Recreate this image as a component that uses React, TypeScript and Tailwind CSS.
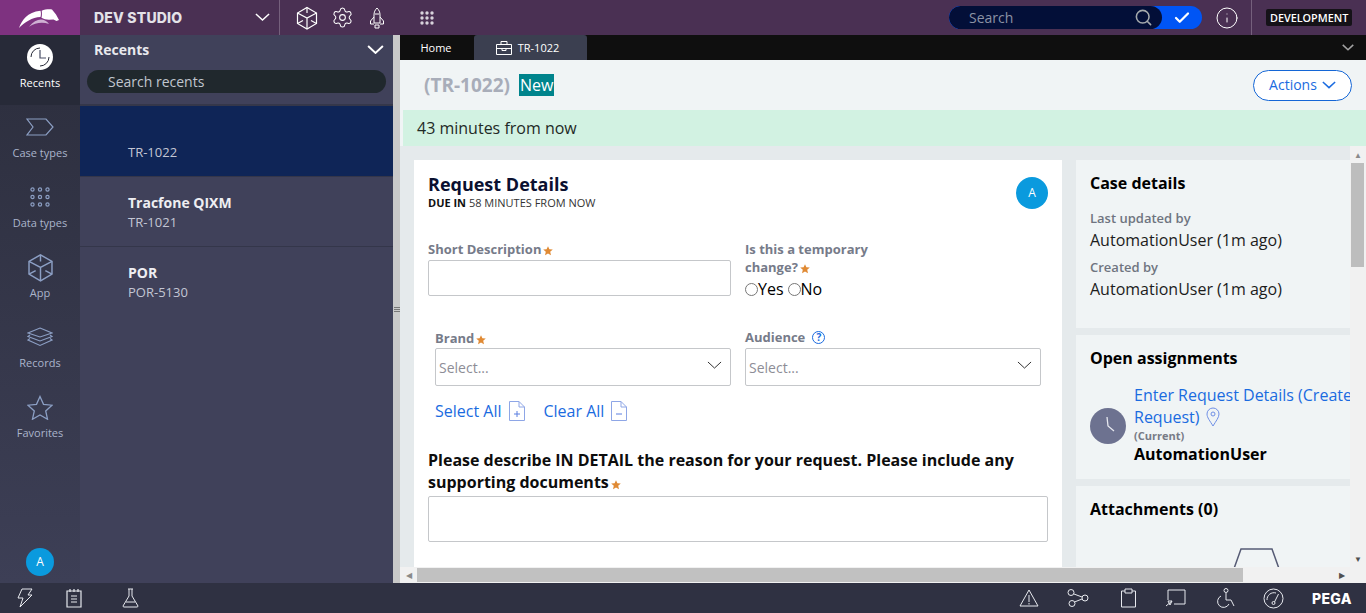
import React from "react";
import { Check, Search, Settings, Info } from "lucide-react";

const sans = "font-['Open_Sans',sans-serif]";

const Logo = () => (
  <svg width="42" height="20" viewBox="0 0 42 20">
    <path d="M0 19C3 11 8 3 21.500 1.700c.6 2 .6 4 0 6.300C13 8.500 6 13 0 19z" fill="#fff" />
    <path d="M10 17.700C14 13 18 10.500 22 10.500c3 0 6 1.500 8 4.500C23 12.500 16 14 10 17.700z" fill="#cfb1d3" />
    <path d="M22.600 1.700C26 .3 30 .2 33 .5l4 5 3 5.500-2.500 1-3-1.500-4.500.2c-3-.2-5.500-.6-7.500-2 .6-2.500.6-5 .1-7.500z" fill="#fff" />
  </svg>
);

const Chevron = ({ width, color, stroke = 1.500 }: { width: number; color: string; stroke?: number }) => (
  <svg width={width} height={width / 2 + 1} viewBox="0 0 16 9" fill="none" stroke={color} strokeWidth={(stroke * 16) / width}>
    <path d="M1 1l7 6.500L15 1" />
  </svg>
);

const Cube = ({ size = 24, color = "#fff" }: { size?: number; color?: string }) => (
  <svg width={size} height={size} viewBox="0 0 24 24" fill="none" stroke={color} strokeWidth="1.200">
    <path d="M12 1.500 21.500 7v10.500L12 23 2.500 17.500V7z" />
    <path d="M2.500 7 12 12l9.500-5M12 12v11M12 1.500V7M2.500 17.500 8 14.500M21.500 17.500 16 14.500" />
  </svg>
);

const Rocket = () => (
  <svg width="16" height="22" viewBox="0 0 16 22" fill="none" stroke="#fff" strokeWidth="1">
    <path d="M8 1c2 2 3 4 3 7v8H5V8c0-3 1-5 3-7z" />
    <path d="M5 10 1.500 14v3H5M11 10l3.500 4v3H11M6 18h4v3H6zM6 7h4" />
  </svg>
);

const navStroke = "#8c9fc4";

const navItems = [
  {
    label: "Case types",
    icon: (
      <svg width="28" height="18" viewBox="0 0 28 18" fill="none" stroke={navStroke} strokeWidth="1.200">
        <path d="M1 1h19l7 8-7 8H1l6-8z" />
      </svg>
    ),
  },
  {
    label: "Data types",
    icon: (
      <svg width="20" height="20" viewBox="0 0 20 20" fill="none" stroke={navStroke} strokeWidth="1.200">
        {[2.500, 10, 17.500].flatMap((y) => [2.500, 10, 17.500].map((x) => <circle key={`${x}-${y}`} cx={x} cy={y} r="1.600" />))}
      </svg>
    ),
  },
  { label: "App", icon: <Cube size={29} color={navStroke} /> },
  {
    label: "Records",
    icon: (
      <svg width="26" height="20" viewBox="0 0 26 20" fill="none" stroke={navStroke} strokeWidth="1.100">
        <path d="M13 1 25 6l-12 4L1 6z" />
        <path d="M3 8 1 9.500l12 4.500 12-4.500L23 8" />
        <path d="M3 11.500 1 13l12 5.500L25 13l-2-1.500" />
      </svg>
    ),
  },
  {
    label: "Favorites",
    icon: (
      <svg width="26" height="25" viewBox="0 0 26 25" fill="none" stroke={navStroke} strokeWidth="1.300">
        <path d="m13 1.500 3.500 7.800 8.500.9-6.300 5.700 1.800 8.300L13 20l-7.500 4.200 1.800-8.300L1 10.200l8.500-.9z" />
      </svg>
    ),
  },
];

const Avatar = ({ size }: { size: string }) => (
  <div className={`${size} flex shrink-0 items-center justify-center rounded-full bg-[#0a9ade] text-[12px] text-white`}>A</div>
);

const Star = () => (
  <svg width="10" height="10" viewBox="0 0 10 10" fill="#e08a34" className="ml-[2px] inline-block align-[-2px]">
    <path d="m5 .2 1.400 3.100 3.400.3-2.600 2.200.8 3.400L5 7.400 2 9.200l.8-3.400L.2 3.600l3.400-.3z" />
  </svg>
);

const Field = ({ label, children, className }: { label: React.ReactNode; children?: React.ReactNode; className?: string }) => (
  <div className={className}>
    <div className="text-[13px] font-bold leading-[18px] text-[#767b89]">{label}</div>
    {children}
  </div>
);

const SelectBox = () => (
  <div className="mt-px flex h-[38px] items-center justify-between rounded-[2px] border border-[#c5c7ca] bg-white pl-[3px] pr-[8px] text-[14px] text-[#8d8d96]">
    <span>Select...</span>
    <span className="-mt-[3px]">
      <Chevron width={15} color="#333" stroke={1} />
    </span>
  </div>
);

const FileIcon = ({ sign }: { sign: string }) => (
  <svg width="18" height="20" viewBox="0 0 18 20" fill="none" stroke="#8ea6e6" strokeWidth="1">
    <path d="M1.500.5H11l5.500 5.500v13.500h-15zM11 .5V6h5.500" />
    <path d={sign} stroke="#5a7fe0" />
  </svg>
);

const SideCard = ({ title, className, children }: { title: string; className?: string; children?: React.ReactNode }) => (
  <div className={`overflow-hidden bg-[#f0f4f5] px-[14px] ${className}`}>
    <div className="text-[16px] font-bold leading-[22px] text-black">{title}</div>
    {children}
  </div>
);

const Meta = ({ label, value }: { label: string; value: string }) => (
  <div>
    <div className="text-[13px] font-semibold leading-[18px] text-[#6f7480]">{label}</div>
    <div className="mt-[2px] text-[16px] leading-[22px] text-[#1c1c1c]">{value}</div>
  </div>
);

export default function App() {
  return (
    <div className={`${sans} flex h-[613px] w-[1366px] flex-col overflow-hidden bg-[#2f3142]`}>
      <header className="flex h-[35px] shrink-0 bg-[#4a3053]">
        <div className="flex w-[80px] items-center justify-center bg-[#7e3280] pt-[3px]">
          <Logo />
        </div>
        <div className="flex w-[200px] items-center justify-between border-r border-[#75607c] pl-[14px] pr-[9px]">
          <span className="font-['Inter',sans-serif] text-[14px] font-extrabold tracking-[0.2px] text-[#e4e2e8]">DEV STUDIO</span>
          <Chevron width={15} color="#fff" />
        </div>
        <div className="ml-[15px] flex items-center gap-[12px]">
          <Cube size={24} />
          <Settings size={23} strokeWidth={1.100} className="text-white" />
          <span className="ml-[3px]">
            <Rocket />
          </span>
          <svg width="14" height="14" viewBox="0 0 14 14" fill="#d8d3dc" className="ml-[23px]">
            {[2, 7, 12].flatMap((y) => [2, 7, 12].map((x) => <circle key={`${x}-${y}`} cx={x} cy={y} r="1.700" />))}
          </svg>
        </div>
        <div className="ml-auto flex items-center">
          <div className="flex h-[23px] w-[253px] overflow-hidden rounded-full bg-[#0055f5]">
            <div className="flex w-[213px] items-center justify-between rounded-full bg-[#030f38] pl-[20px] pr-[9px]">
              <span className="text-[14px] text-[#8b92a5]">Search</span>
              <Search size={19} strokeWidth={2} className="text-[#a4a9ac]" />
            </div>
            <div className="flex flex-1 items-center justify-center">
              <Check size={18} strokeWidth={3} className="text-white" />
            </div>
          </div>
          <Info size={24} strokeWidth={1} className="ml-[13px] text-white" />
          <div className="ml-[12px] flex h-[35px] w-[115px] items-center border-l border-[#75607c] pl-[14px]">
            <span className="whitespace-nowrap rounded-[2px] bg-[#151218] px-[4px] py-[1px] text-[10.800px] font-semibold leading-[15px] text-white">DEVELOPMENT</span>
          </div>
        </div>
      </header>

      <div className="flex min-h-0 flex-1">
        <nav className="flex w-[80px] shrink-0 flex-col bg-gradient-to-b from-[#2c2e3d] to-[#3d3f56]">
          <div className="flex h-[70px] flex-col items-center bg-[#272a38] pt-[9px]">
            <svg width="26" height="26" viewBox="0 0 26 26">
              <circle cx="13" cy="13" r="13" fill="#fff" />
              <path d="M13 6v8h6" fill="none" stroke="#4a4f66" strokeWidth="1.200" />
              <path d="M4 13a9 9 0 0 1 9-9M22 13a9 9 0 0 1-9 9" fill="none" stroke="#272a38" strokeWidth="1" />
            </svg>
            <span className="mt-[5px] text-[11px] leading-[16px] text-white">Recents</span>
          </div>
          {navItems.map((item) => (
            <div key={item.label} className="flex h-[70px] flex-col items-center justify-end pb-[14px]">
              <div className="flex h-[30px] items-center">{item.icon}</div>
              <span className="mt-[3px] text-[11px] leading-[16px] text-[#aab4cb]">{item.label}</span>
            </div>
          ))}
          <div className="mt-auto mb-[7px] flex justify-center">
            <Avatar size="h-[28px] w-[28px]" />
          </div>
        </nav>

        <aside className="flex w-[313px] shrink-0 flex-col bg-[#40415a]">
          <div className="h-[71px] shrink-0 border-b-2 border-[#35374a]">
            <div className="flex h-[29px] items-center justify-between pl-[14px] pr-[9px]">
              <span className="text-[14px] font-bold text-[#e9e9ee]">Recents</span>
              <Chevron width={17} color="#fff" stroke={2} />
            </div>
            <div className="ml-[7px] mr-[7px] mt-[6px] flex h-[23px] items-center rounded-full bg-[#20282d] pl-[21px] text-[14px] text-[#c0c6cf]">Search recents</div>
          </div>
          <div className="h-[71px] border-b border-[#34364a] bg-[#0f2557] pl-[48px] pt-[37px] text-[13px] leading-[18px] text-[#c3c6d4]">TR-1022</div>
          <div className="h-[70px] border-b border-[#34364a] pl-[48px] pt-[16px]">
            <div className="text-[14px] font-bold leading-[20px] text-[#eeeef2]">Tracfone QIXM</div>
            <div className="text-[13px] leading-[18px] text-[#c3c6d4]">TR-1021</div>
          </div>
          <div className="h-[70px] pl-[48px] pt-[16px]">
            <div className="text-[14px] font-bold leading-[20px] text-[#eeeef2]">POR</div>
            <div className="text-[13px] leading-[18px] text-[#c3c6d4]">POR-5130</div>
          </div>
        </aside>

        <div className="flex w-[7px] shrink-0 flex-col items-center justify-center gap-[1px] bg-[#c9c9c9]">
          <div className="h-px w-[6px] bg-[#777]" />
          <div className="h-px w-[6px] bg-[#777]" />
          <div className="h-px w-[6px] bg-[#777]" />
        </div>

        <main className="flex min-w-0 flex-1 flex-col">
          <div className="flex h-[25px] shrink-0 bg-[#0f0f0f] text-[11px] text-white">
            <div className="flex w-[74px] items-center justify-center pr-[2px] pt-px">Home</div>
            <div className="flex w-[113px] items-center justify-center gap-[6px] rounded-t-[3px] bg-[#3b3f50] pr-[6px] pt-px">
              <svg width="16" height="14" viewBox="0 0 16 14" fill="none" stroke="#fff" strokeWidth="1">
                <path d="M.5 3.500h15v10H.5zM5 3.500v-3h6v3M.5 7.500h15M6 7.500v2h4v-2" />
              </svg>
              TR-1022
            </div>
            <span className="ml-auto mr-[12px] mt-[9px]">
              <Chevron width={12} color="#a3a3a3" />
            </span>
          </div>

          <div className="flex h-[50px] shrink-0 items-center bg-[#f0f4f5] pl-[24px] pr-[14px]">
            <span className="text-[19px] font-bold text-[#a8adb9]">(TR-1022)</span>
            <span className="ml-[9px] bg-[#00848c] px-px text-[16px] leading-[22px] text-white">New</span>
            <div className="ml-auto flex h-[31px] w-[99px] items-center justify-center gap-[5px] rounded-full border border-[#1466d6] bg-white pb-px text-[14px] text-[#1a6be0]">
              Actions
              <Chevron width={14} color="#1a6be0" />
            </div>
          </div>

          <div className="flex h-[36px] shrink-0 items-center border-l-[3px] border-[#f0f4f5] bg-[#d2f2e2] pl-[14px] text-[16px] text-[#1f2a26]">43 minutes from now</div>

          <div className="flex min-h-0 flex-1">
            <div className="flex min-w-0 flex-1 flex-col">
              <div className="flex min-h-0 flex-1 gap-[14px] overflow-hidden bg-[#e5eaec] pl-[14px] pt-[14px]">
                <section className="w-[648px] shrink-0 bg-white px-[14px] pt-[13px]">
                  <div className="flex items-start justify-between">
                    <div>
                      <div className="text-[18px] font-bold leading-[23px] text-[#0a1030]">Request Details</div>
                      <div className="text-[11px] leading-[14px] text-[#333]">
                        <b className="text-[#111]">DUE IN</b> 58 MINUTES FROM NOW
                      </div>
                    </div>
                    <Avatar size="h-[32px] w-[32px] mt-[4px]" />
                  </div>

                  <div className="mt-[30px] flex">
                    <Field className="w-[303px]" label={<>Short Description<Star /></>}>
                      <div className="mt-[2px] h-[36px] rounded-[2px] border border-[#c5c7ca]" />
                    </Field>
                    <Field className="ml-[14px] w-[160px]" label={<>Is this a temporary change?<Star /></>}>
                      <div className="mt-[2px] flex items-center text-[16px] leading-[22px] text-black">
                        <span className="h-[13px] w-[13px] rounded-full border border-[#777]" />
                        Yes
                        <span className="ml-[4px] h-[13px] w-[13px] rounded-full border border-[#777]" />
                        No
                      </div>
                    </Field>
                  </div>

                  <div className="mt-[29px] flex gap-[14px] pl-[7px]">
                    <Field className="w-[296px]" label={<>Brand<Star /></>}>
                      <SelectBox />
                    </Field>
                    <Field
                      className="w-[296px]"
                      label={
                        <span className="flex -translate-y-px items-center gap-[7px]">
                          Audience
                          <span className="flex h-[13px] w-[13px] items-center justify-center rounded-full border border-[#1a6be0] text-[10px] text-[#1a6be0]">?</span>
                        </span>
                      }
                    >
                      <SelectBox />
                    </Field>
                  </div>

                  <div className="ml-[7px] mt-[14px] flex items-center text-[16px] leading-[22px] text-[#1a6be0]">
                    Select All
                    <span className="ml-[6px]">
                      <FileIcon sign="M6 13h6M9 10v6" />
                    </span>
                    <span className="ml-[18px]">Clear All</span>
                    <span className="ml-[6px]">
                      <FileIcon sign="M6 13h6" />
                    </span>
                  </div>

                  <div className="mt-[27px] text-[16px] font-bold leading-[22px] text-[#0d0d0d]">
                    Please describe IN DETAIL the reason for your request. Please include any supporting documents
                    <Star />
                  </div>
                  <div className="mt-[3px] h-[46px] rounded-[2px] border border-[#c5c7ca]" />
                </section>

                <div className="flex w-[274px] shrink-0 flex-col gap-[7px] overflow-hidden">
                  <SideCard title="Case details" className="h-[168px] shrink-0 pt-[12px]">
                    <div className="mt-[15px] flex flex-col gap-[7px]">
                      <Meta label="Last updated by" value="AutomationUser (1m ago)" />
                      <Meta label="Created by" value="AutomationUser (1m ago)" />
                    </div>
                  </SideCard>
                  <SideCard title="Open assignments" className="h-[144px] shrink-0 pt-[12px]">
                    <div className="mt-[15px] flex items-center gap-[8px]">
                      <div className="mt-[2px] flex h-[36px] w-[36px] shrink-0 items-center justify-center rounded-full bg-[#6d7290]">
                        <svg width="36" height="36" viewBox="0 0 36 36" fill="none" stroke="#e6e8ef" strokeWidth="1.300">
                          <path d="M17 9l1 9 6 5" />
                        </svg>
                      </div>
                      <div className="min-w-0">
                        <div className="w-[216px] whitespace-nowrap text-[16px] leading-[22px] text-[#1a6be0]">
                          Enter Request Details (Create
                          <br />
                          <span className="inline-flex items-center gap-[6px]">
                            Request)
                            <svg width="14" height="20" viewBox="0 0 14 20" fill="none" stroke="#6f8fe6" strokeWidth="1">
                              <path d="M7 19C4 14 1 10.500 1 7a6 6 0 0 1 12 0c0 3.500-3 7-6 12z" />
                              <circle cx="7" cy="7" r="2" />
                            </svg>
                          </span>
                        </div>
                        <div className="mt-px text-[11px] font-bold leading-[14px] text-[#777b86]">(Current)</div>
                        <div className="text-[16px] font-bold leading-[22px] text-black">AutomationUser</div>
                      </div>
                    </div>
                  </SideCard>
                  <SideCard title="Attachments (0)" className="min-h-0 flex-1 pt-[12px]">
                    <div className="ml-[141px] mt-[28px]">
                      <svg width="51" height="30" viewBox="0 0 51 30" fill="none" stroke="#565b75" strokeWidth="1.500">
                        <path d="M0 29 10 1h31l10 28" />
                      </svg>
                    </div>
                  </SideCard>
                </div>
              </div>

              <div className="flex h-[16px] shrink-0 items-center bg-[#f1f1f1]">
                <span className="flex w-[17px] justify-center text-[8px] leading-none text-[#8a8a8a]">◀</span>
                <div className="h-[14px] w-[826px] bg-[#c1c1c1]" />
                <span className="ml-auto flex w-[17px] justify-center text-[8px] leading-none text-[#505050]">▶</span>
              </div>
            </div>

            <div className="flex w-[16px] shrink-0 flex-col items-center bg-[#f1f1f1]">
              <span className="h-[17px] text-[8px] leading-[17px] text-[#8a8a8a]">▲</span>
              <div className="ml-[-1px] h-[104px] w-[13px] bg-[#bdbdbd]" />
              <span className="mt-auto h-[33px] text-[8px] leading-[17px] text-[#505050]">▼</span>
            </div>
          </div>
        </main>
      </div>

      <footer className="flex h-[30px] shrink-0 items-center bg-[#2f3142] text-white">
        <div className="flex items-center gap-[33px] pl-[17px]">
          <svg width="16" height="20" viewBox="0 0 16 20" fill="none" stroke="#e7e9ee" strokeWidth="1">
            <path d="M5 1h10l-4 6h4L3 19l3-9H1z" />
          </svg>
          <svg width="16" height="20" viewBox="0 0 16 20" fill="none" stroke="#e7e9ee" strokeWidth="1.200">
            <path d="M1 3h14v16H1zM4 1v3M8 1v3M12 1v3M5 8h6M5 11h6M5 14h6" />
          </svg>
          <svg width="17" height="20" viewBox="0 0 17 20" fill="none" stroke="#e7e9ee" strokeWidth="1" className="ml-[7px]">
            <path d="M6 1h5M7 1v7L1 18q0 1 1 1h13q1 0 1-1L10 8V1M4 14h9" />
          </svg>
        </div>
        <div className="ml-auto flex items-center gap-[28px] pr-[14px]">
          <svg width="20" height="18" viewBox="0 0 20 18" fill="none" stroke="#e7e9ee" strokeWidth="1">
            <path d="M10 1 19 17H1zM10 6v7M10 14v1.500" />
          </svg>
          <svg width="22" height="18" viewBox="0 0 22 18" fill="none" stroke="#e7e9ee" strokeWidth="1">
            <circle cx="4" cy="3.500" r="3" />
            <circle cx="18" cy="9" r="3" />
            <circle cx="5" cy="14.500" r="3" />
            <path d="m7 5 8 3M7.500 13 15 10" />
          </svg>
          <svg width="17" height="20" viewBox="0 0 17 20" fill="none" stroke="#e7e9ee" strokeWidth="1" className="ml-[3px]">
            <path d="M5 3H1.500v16h14V3H12M5 1h7v4H5z" />
          </svg>
          <svg width="21" height="18" viewBox="0 0 21 18" fill="none" stroke="#e7e9ee" strokeWidth="1">
            <path d="M3 11V1h17v14H9M1 17l6-5M3 12l4 0-2 4z" />
          </svg>
          <svg width="21" height="20" viewBox="0 0 21 20" fill="none" stroke="#e7e9ee" strokeWidth="1">
            <circle cx="12" cy="2.500" r="2" />
            <path d="M7 8a6 6 0 1 0 8 8M12 5v7h5l3 6" />
          </svg>
          <svg width="21" height="21" viewBox="0 0 21 21" fill="none" stroke="#e7e9ee" strokeWidth="1">
            <circle cx="10.500" cy="10.500" r="9.500" />
            <circle cx="10.500" cy="15" r="1.500" />
            <path d="m11.500 14 4-8M4 12a7 7 0 0 1 9-7" />
          </svg>
          <span className="font-['Inter',sans-serif] text-[14px] font-extrabold tracking-[0.4px]">PEGA</span>
        </div>
      </footer>
    </div>
  );
}
